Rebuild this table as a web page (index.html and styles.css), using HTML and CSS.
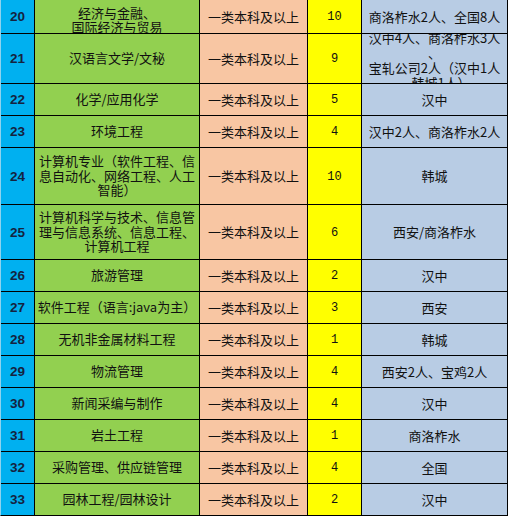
FILE: index.html
```html
<!DOCTYPE html>
<html lang="zh-CN">
<head>
<meta charset="utf-8">
<title>招聘专业表</title>
<link rel="stylesheet" href="styles.css">
</head>
<body>
<div class="sheet">
  <div class="cell n">20</div>
  <div class="cell m first"><div>经济与金融、<br>国际经济与贸易</div></div>
  <div class="cell r">一类本科及以上</div>
  <div class="cell c">10</div>
  <div class="cell l">商洛柞水2人、全国8人</div>

  <div class="cell n">21</div>
  <div class="cell m">汉语言文学/文秘</div>
  <div class="cell r">一类本科及以上</div>
  <div class="cell c">9</div>
  <div class="cell l tight"><div>汉中4人、商洛柞水3人<br>、<br>宝轧公司2人（汉中1人<br>，韩城1人）</div></div>

  <div class="cell n">22</div>
  <div class="cell m">化学/应用化学</div>
  <div class="cell r">一类本科及以上</div>
  <div class="cell c">5</div>
  <div class="cell l">汉中</div>

  <div class="cell n">23</div>
  <div class="cell m">环境工程</div>
  <div class="cell r">一类本科及以上</div>
  <div class="cell c">4</div>
  <div class="cell l">汉中2人、商洛柞水2人</div>

  <div class="cell n">24</div>
  <div class="cell m"><div>计算机专业（软件工程、信<br>息自动化、网络工程、人工<br>智能）</div></div>
  <div class="cell r">一类本科及以上</div>
  <div class="cell c">10</div>
  <div class="cell l">韩城</div>

  <div class="cell n">25</div>
  <div class="cell m"><div>计算机科学与技术、信息管<br>理与信息系统、信息工程、<br>计算机工程</div></div>
  <div class="cell r">一类本科及以上</div>
  <div class="cell c">6</div>
  <div class="cell l">西安/商洛柞水</div>

  <div class="cell n">26</div>
  <div class="cell m">旅游管理</div>
  <div class="cell r">一类本科及以上</div>
  <div class="cell c">2</div>
  <div class="cell l">汉中</div>

  <div class="cell n">27</div>
  <div class="cell m">软件工程（语言:java为主）</div>
  <div class="cell r">一类本科及以上</div>
  <div class="cell c">3</div>
  <div class="cell l">西安</div>

  <div class="cell n">28</div>
  <div class="cell m">无机非金属材料工程</div>
  <div class="cell r">一类本科及以上</div>
  <div class="cell c">1</div>
  <div class="cell l">韩城</div>

  <div class="cell n">29</div>
  <div class="cell m">物流管理</div>
  <div class="cell r">一类本科及以上</div>
  <div class="cell c">4</div>
  <div class="cell l">西安2人、宝鸡2人</div>

  <div class="cell n">30</div>
  <div class="cell m">新闻采编与制作</div>
  <div class="cell r">一类本科及以上</div>
  <div class="cell c">4</div>
  <div class="cell l">汉中</div>

  <div class="cell n">31</div>
  <div class="cell m">岩土工程</div>
  <div class="cell r">一类本科及以上</div>
  <div class="cell c">1</div>
  <div class="cell l">商洛柞水</div>

  <div class="cell n">32</div>
  <div class="cell m">采购管理、供应链管理</div>
  <div class="cell r">一类本科及以上</div>
  <div class="cell c">4</div>
  <div class="cell l">全国</div>

  <div class="cell n">33</div>
  <div class="cell m">园林工程/园林设计</div>
  <div class="cell r">一类本科及以上</div>
  <div class="cell c">2</div>
  <div class="cell l">汉中</div>
</div>
</body>
</html>
```
FILE: styles.css
```css
html, body {
  margin: 0;
  padding: 0;
  background: #ffffff;
}

.sheet {
  display: grid;
  width: max-content;
  grid-template-columns: 33px 164px 107px 53px 145px;
  grid-template-rows: 33px 49px 31px 31px 56px 54px 31px repeat(7, 31px);
  gap: 1px;
  background: #000000;
  border-left: 1px solid #8fd3ee;
  border-right: 1px solid #000000;
  border-bottom: 1px solid #000000;
  font-family: "Noto Sans CJK SC", "Noto Sans", sans-serif;
  font-size: 13px;
  line-height: 14px;
  color: #111111;
}

.cell {
  display: flex;
  align-items: center;
  justify-content: center;
  text-align: center;
  overflow: hidden;
  white-space: nowrap;
}

.n {
  background: #00b0f0;
  font-family: "Liberation Sans", Arial, sans-serif;
  font-weight: bold;
  font-size: 13.5px;
  color: #15233f;
  padding-top: 1px;
}

.m {
  background: #92d050;
  line-height: 14.5px;
}

.m.first {
  padding-top: 6px;
  line-height: 13.5px;
}

.r {
  background: #f8c6a3;
}

.c {
  background: #ffff00;
  font-family: "Liberation Mono", monospace;
  font-size: 12px;
  padding-top: 1px;
}

.l {
  background: #b8cce4;
}

.l.tight {
  line-height: 15px;
  padding-top: 2px;
}
```
